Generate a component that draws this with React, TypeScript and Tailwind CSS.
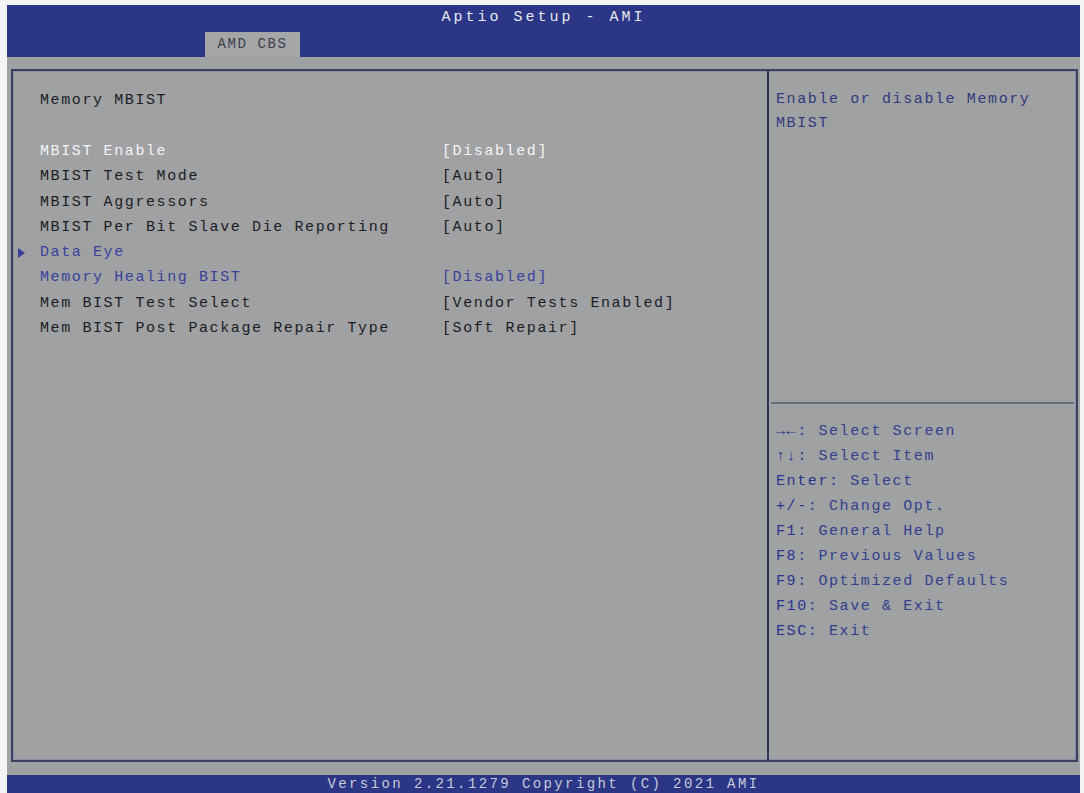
const rows: { label: string; value?: string; kind: "sel" | "normal" | "blue" | "sub" }[] = [
  { label: "MBIST Enable", value: "[Disabled]", kind: "sel" },
  { label: "MBIST Test Mode", value: "[Auto]", kind: "normal" },
  { label: "MBIST Aggressors", value: "[Auto]", kind: "normal" },
  { label: "MBIST Per Bit Slave Die Reporting", value: "[Auto]", kind: "normal" },
  { label: "Data Eye", kind: "sub" },
  { label: "Memory Healing BIST", value: "[Disabled]", kind: "blue" },
  { label: "Mem BIST Test Select", value: "[Vendor Tests Enabled]", kind: "normal" },
  { label: "Mem BIST Post Package Repair Type", value: "[Soft Repair]", kind: "normal" },
];

const help = [
  ["\u2192\u2190", "Select Screen"],
  ["\u2191\u2193", "Select Item"],
  ["Enter", "Select"],
  ["+/-", "Change Opt."],
  ["F1", "General Help"],
  ["F8", "Previous Values"],
  ["F9", "Optimized Defaults"],
  ["F10", "Save & Exit"],
  ["ESC", "Exit"],
];

const font = "font-['Liberation_Mono',monospace] text-[15px] tracking-[1.6px]";

export default function App() {
  return (
    <div className={`w-[1084px] h-[793px] bg-[#f4f4f4] pl-[7px] pr-[4px] pt-[5px] flex flex-col ${font}`}>
      <header className="h-[52px] bg-[#2b3687] flex flex-col shrink-0">
        <div className="text-center text-[#e8e8f0] leading-[22px] pt-[2px] tracking-[3px]">Aptio Setup - AMI</div>
        <div className="mt-auto pl-[198px]">
          <div className="w-[95px] h-[25px] bg-[#a4a6a8] text-[#3c3e4a] flex items-center justify-center text-[14px]">
            AMD CBS
          </div>
        </div>
      </header>

      <main className="flex-1 bg-[#9fa1a3] pt-[12px] pb-[13px] pl-[4px] pr-[2px] flex flex-col">
        <div className="flex-1 flex border-2 border-[#3b3f5e] shadow-[inset_0_0_0_1px_#8a8ca8]">
          <section className="w-[754px] pl-[27px] pt-[17px] text-[#1c1c24]">
            <div className="leading-[25px]">Memory MBIST</div>
            <div className="h-[26px]" />
            {rows.map((r) => {
              const color =
                r.kind === "sel" ? "text-[#f4f4f8]" : r.kind === "blue" || r.kind === "sub" ? "text-[#3b3f9c]" : "text-[#1c1c24]";
              return (
                <div key={r.label} className={`flex leading-[25.3px] relative ${color}`}>
                  {r.kind === "sub" && (
                    <span className="absolute left-[-22px] top-[8px] w-0 h-0 border-y-[5px] border-y-transparent border-l-[7px] border-l-[#3b3f9c]" />
                  )}
                  <span className="w-[402px] shrink-0 whitespace-pre">{r.label}</span>
                  <span className="whitespace-pre">{r.value}</span>
                </div>
              );
            })}
          </section>

          <aside className="flex-1 border-l-2 border-[#2e3358] flex flex-col">
            <div className="h-[333px] pl-[5px] pt-[17px] leading-[24px] text-[#33397e] border-b-2 border-[#6a6c80] mx-[2px]">
              Enable or disable Memory
              <br />
              MBIST
            </div>
            <div className="pl-[7px] pt-[15px] text-[#33408e]">
              {help.map(([k, v]) => (
                <div key={k} className="leading-[25px] whitespace-pre">
                  <span className="text-[#2a3490]">{k}</span>: {v}
                </div>
              ))}
            </div>
          </aside>
        </div>
      </main>

      <footer className="h-[18px] bg-[#2b3687] shrink-0 text-center text-[#c8cad8] text-[14px] tracking-[2.4px] leading-[18px]">
        Version 2.21.1279 Copyright (C) 2021 AMI
      </footer>
    </div>
  );
}
